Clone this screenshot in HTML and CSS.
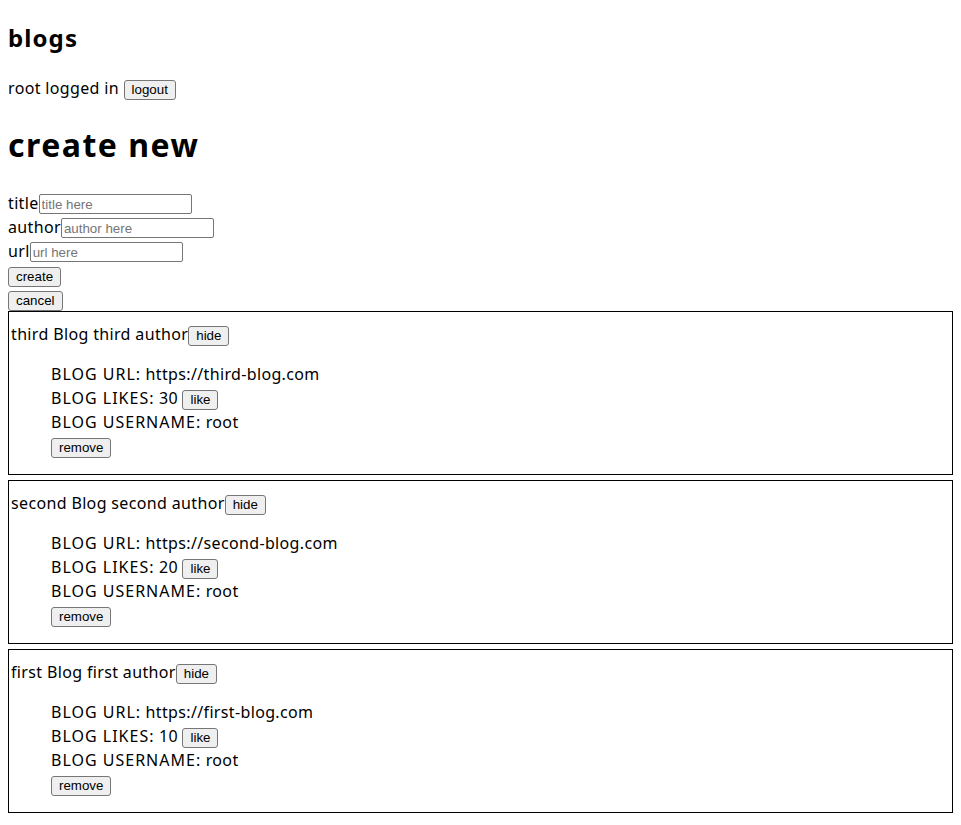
FILE: index.html
```html
<!DOCTYPE html>
<html>
<head>
<meta charset="utf-8">
<title>blogs</title>
<link rel="stylesheet" href="styles.css">
</head>
<body>
<div class="app">
  <h2 class="title">blogs</h2>
  <p class="user">root logged in <button class="btn">logout</button></p>
  <h1 class="heading">create new</h1>
  <form class="form">
    <div class="row">title<input class="field" placeholder="title here"></div>
    <div class="row">author<input class="field" placeholder="author here"></div>
    <div class="row">url<input class="field" placeholder="url here"></div>
    <div class="row"><button class="btn" type="button">create</button></div>
    <div class="row"><button class="btn" type="button">cancel</button></div>
  </form>
  <div class="blog">
    <div>third Blog third author<button class="btn">hide</button></div>
    <ul class="details">
      <li><span class="label">BLOG URL:</span> https://third-blog.com</li>
      <li><span class="label">BLOG LIKES:</span> 30 <button class="btn">like</button></li>
      <li><span class="label">BLOG USERNAME:</span> root</li>
      <li><button class="btn">remove</button></li>
    </ul>
  </div>
  <div class="blog">
    <div>second Blog second author<button class="btn">hide</button></div>
    <ul class="details">
      <li><span class="label">BLOG URL:</span> https://second-blog.com</li>
      <li><span class="label">BLOG LIKES:</span> 20 <button class="btn">like</button></li>
      <li><span class="label">BLOG USERNAME:</span> root</li>
      <li><button class="btn">remove</button></li>
    </ul>
  </div>
  <div class="blog">
    <div>first Blog first author<button class="btn">hide</button></div>
    <ul class="details">
      <li><span class="label">BLOG URL:</span> https://first-blog.com</li>
      <li><span class="label">BLOG LIKES:</span> 10 <button class="btn">like</button></li>
      <li><span class="label">BLOG USERNAME:</span> root</li>
      <li><button class="btn">remove</button></li>
    </ul>
  </div>
</div>
</body>
</html>
```
FILE: styles.css
```css
html, body {
  margin: 0;
  padding: 0;
}
body {
  font-family: "Noto Sans", "Liberation Sans", sans-serif;
  font-size: 16px;
  line-height: 24px;
  letter-spacing: 0.35px;
  color: #000;
  background: #fff;
}
.app {
  padding: 19.92px 8px 8px;
}
.title {
  font-size: 24px;
  line-height: 36px;
  font-weight: bold;
  letter-spacing: 1.1px;
  margin: 0 0 19.92px;
}
.user {
  margin: 0;
}
.heading {
  font-size: 32px;
  line-height: 48px;
  font-weight: bold;
  letter-spacing: 1.5px;
  margin: 21.44px 0;
}
.form {
  margin: 0;
}
.row {
  height: 24px;
}
.field {
  box-sizing: border-box;
  width: 153px;
  height: 20px;
  padding: 0 2px;
  margin: 0;
  border: 1px solid #767676;
  border-radius: 2px;
  font-family: "Liberation Sans", Arial, sans-serif;
  font-size: 13.33px;
  letter-spacing: 0;
  vertical-align: baseline;
}
.field::placeholder {
  color: #757575;
}
.btn {
  box-sizing: border-box;
  height: 20px;
  padding: 0 7px;
  margin: 0;
  border: 1px solid #767676;
  border-radius: 3px;
  background: #efefef;
  color: #000;
  font-family: "Liberation Sans", Arial, sans-serif;
  font-size: 13.33px;
  line-height: 18px;
  letter-spacing: 0;
}
.blog {
  border: 1px solid #000;
  padding: 10px 0 0 2px;
  margin-bottom: 5px;
}
.details {
  list-style: none;
  margin: 16px 0;
  padding-left: 40px;
}
.label {
  letter-spacing: 1px;
}
```
